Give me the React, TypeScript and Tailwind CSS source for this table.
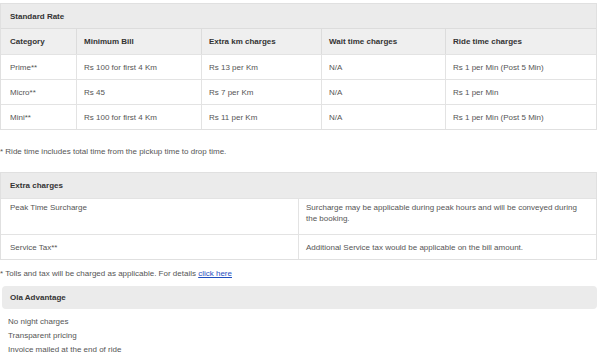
import React from "react";

const rows = [
  ["Prime**", "Rs 100 for first 4 Km", "Rs 13 per Km", "N/A", "Rs 1 per Min (Post 5 Min)"],
  ["Micro**", "Rs 45", "Rs 7 per Km", "N/A", "Rs 1 per Min"],
  ["Mini**", "Rs 100 for first 4 Km", "Rs 11 per Km", "N/A", "Rs 1 per Min (Post 5 Min)"],
];

const headers = ["Category", "Minimum Bill", "Extra km charges", "Wait time charges", "Ride time charges"];

const gridCols = "grid grid-cols-[75px_125px_120px_124px_152px]";

export default function App() {
  return (
    <div
      className="w-[600px] h-[362px] bg-white overflow-hidden text-[8px] leading-[11px] text-[#555]"
      style={{ fontFamily: '"Liberation Sans", Arial, sans-serif' }}
    >
      <div className="pt-[3px] w-[597px]">
        {/* Standard Rate table */}
        <div className="border border-[#e0e0e0]">
          <div className="h-[25px] flex items-center px-[9px] bg-[#ebebeb] font-bold text-[#333] border-b border-[#dcdcdc]">
            Standard Rate
          </div>
          <div className={`${gridCols} bg-[#efefef] font-bold text-[#333] h-[25px]`}>
            {headers.map((h, i) => (
              <div
                key={h}
                className={`flex items-center ${i === 0 ? "px-[9px]" : "px-[7px] border-l border-[#dcdcdc]"}`}
              >
                {h}
              </div>
            ))}
          </div>
          {rows.map((r, ri) => (
            <div key={ri} className={`${gridCols} h-[25px] border-t border-[#e3e3e3]`}>
              {r.map((c, i) => (
                <div
                  key={i}
                  className={`flex items-center ${i === 0 ? "px-[9px]" : "px-[7px] border-l border-[#e3e3e3]"}`}
                >
                  {c}
                </div>
              ))}
            </div>
          ))}
        </div>

        <div className="h-[42px] flex items-center">
          * Ride time includes total time from the pickup time to drop time.
        </div>

        {/* Extra charges table */}
        <div className="border border-[#e0e0e0]">
          <div className="h-[25px] flex items-center px-[9px] bg-[#ebebeb] font-bold text-[#333]">
            Extra charges
          </div>
          <div className="grid grid-cols-[297px_1fr] border-t border-[#e3e3e3]">
            <div className="px-[9px] pt-[3px] h-[35px]">Peak Time Surcharge</div>
            <div className="px-[7px] pt-[3px] border-l border-[#e3e3e3]">
              Surcharge may be applicable during peak hours and will be conveyed during the booking.
            </div>
          </div>
          <div className="grid grid-cols-[297px_1fr] border-t border-[#e3e3e3] h-[25px]">
            <div className="px-[9px] flex items-center">Service Tax**</div>
            <div className="px-[7px] flex items-center border-l border-[#e3e3e3]">
              Additional Service tax would be applicable on the bill amount.
            </div>
          </div>
        </div>

        <div className="h-[26px] flex items-center">
          * Tolls and tax will be charged as applicable. For details&nbsp;
          <a href="#" className="text-[#1f4fbf] underline">
            click here
          </a>
        </div>

        <div className="ml-[2px] h-[23px] rounded-[4px] bg-[#ebebeb] flex items-center px-[8px] text-[#333] font-semibold">
          Ola Advantage
        </div>

        <div className="pl-[8px] pt-[6px] flex flex-col leading-[14px]">
          <div>No night charges</div>
          <div>Transparent pricing</div>
          <div>Invoice mailed at the end of ride</div>
        </div>
      </div>
    </div>
  );
}
